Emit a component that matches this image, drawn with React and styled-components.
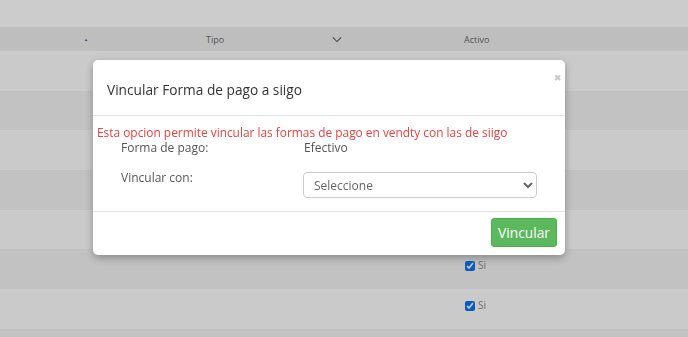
import React from "react";
import styled, { createGlobalStyle } from "styled-components";

const GlobalStyle = createGlobalStyle`
  html, body {
    margin: 0;
    padding: 0;
    background: #ffffff;
    font-family: "Open Sans", "Liberation Sans", sans-serif;
    overflow: hidden;
  }
`;

const rows = [
  { shade: false },
  { shade: true },
  { shade: false },
  { shade: true },
  { shade: false },
  { shade: true, active: true },
  { shade: false, active: true },
];

function App() {
  return (
    <>
      <GlobalStyle />
      <Page>
        <TopBar />
        <HeadRow>
          <SortMark>▲</SortMark>
          <HeadCell>Tipo</HeadCell>
          <Chevron viewBox="0 0 12 8">
            <path d="M1 1.5 L6 6.5 L11 1.5" fill="none" stroke="#5a5a5a" strokeWidth="1.3" />
          </Chevron>
          <HeadCell $wide>Activo</HeadCell>
        </HeadRow>
        {rows.map((r, i) => (
          <Row key={i} $shade={r.shade}>
            {r.active && (
              <ActiveCell>
                <Check type="checkbox" checked readOnly />
                <Yes>Si</Yes>
              </ActiveCell>
            )}
          </Row>
        ))}
        <Row $shade />
      </Page>

      <Backdrop>
        <Modal>
          <Close>✖</Close>
          <ModalHeader>
            <Title>Vincular Forma de pago a siigo</Title>
          </ModalHeader>
          <ModalBody>
            <Warning>
              Esta opcion permite vincular las formas de pago en vendty con las de siigo
            </Warning>
            <FormRow>
              <Label>Forma de pago:</Label>
              <Value>Efectivo</Value>
            </FormRow>
            <FormRow $gap>
              <Label>Vincular con:</Label>
              <SelectBox>
                <option>Seleccione</option>
              </SelectBox>
            </FormRow>
          </ModalBody>
          <ModalFooter>
            <LinkBtn>Vincular</LinkBtn>
          </ModalFooter>
        </Modal>
      </Backdrop>
    </>
  );
}

const Page = styled.div`
  width: 100%;
  height: 337px;
  overflow: hidden;
`;

const TopBar = styled.div`
  height: 27px;
  background: #ffffff;
`;

const HeadRow = styled.div`
  height: 24px;
  background: #eeeeee;
  display: flex;
  align-items: center;
  font-size: 9px;
  color: #6a6a6a;
`;

const SortMark = styled.span`
  font-size: 4px;
  color: #4a3aa0;
  margin-left: 84px;
  width: 120px;
`;

const HeadCell = styled.span`
  width: ${(p) => (p.$wide ? "auto" : "126px")};
  margin-left: ${(p) => (p.$wide ? "122px" : "2px")};
`;

const Chevron = styled.svg`
  width: 10px;
  height: 7px;
`;

const Row = styled.div`
  height: 39.7px;
  box-sizing: border-box;
  background: ${(p) => (p.$shade ? "#f3f3f3" : "#fdfdfd")};
  border-top: 1px solid ${(p) => (p.$shade ? "#f0f0f0" : "#ffffff")};
  display: flex;
  align-items: flex-start;
`;

const ActiveCell = styled.div`
  margin: 9px 0 0 465px;
  display: flex;
  align-items: flex-start;
`;

const Check = styled.input`
  width: 10px;
  height: 10px;
  margin: 2px 3px 0 0;
  accent-color: #0b74f0;
`;

const Yes = styled.span`
  font-size: 10px;
  color: #8a8a8a;
  line-height: 12px;
`;

const Backdrop = styled.div`
  position: fixed;
  inset: 0;
  background: rgba(0, 0, 0, 0.2);
`;

const Modal = styled.div`
  position: relative;
  margin: 60px 0 0 93px;
  width: 472px;
  background: #ffffff;
  border-radius: 5px;
  box-shadow: 0 3px 9px rgba(0, 0, 0, 0.3);
  color: #555555;
`;

const Close = styled.span`
  position: absolute;
  top: 11px;
  right: 3px;
  font-size: 9px;
  color: #c8c8c8;
`;

const ModalHeader = styled.div`
  padding: 20px 14px 15px;
  border-bottom: 1px solid #e5e5e5;
`;

const Title = styled.h4`
  margin: 0;
  font-size: 13.7px;
  font-weight: 400;
  line-height: 20px;
  color: #333333;
`;

const ModalBody = styled.div`
  padding: 8px 28px 13px 4px;
`;

const Warning = styled.div`
  font-size: 11.9px;
  line-height: 16px;
  color: #e8413e;
`;

const FormRow = styled.div`
  display: grid;
  grid-template-columns: 182px 1fr;
  margin-top: ${(p) => (p.$gap ? "14px" : "0")};
  padding-left: 24px;
  font-size: 12px;
  line-height: 16px;
`;

const Label = styled.span`
  color: #555555;
`;

const Value = styled.span`
  color: #555555;
  padding-left: 1px;
`;

const SelectBox = styled.select`
  margin-top: 2px;
  height: 26px;
  width: 234px;
  padding: 0 6px;
  border: 1px solid #cccccc;
  border-radius: 4px;
  background: #ffffff;
  font-family: "Open Sans", "Liberation Sans", sans-serif;
  font-size: 12px;
  color: #666666;
`;

const ModalFooter = styled.div`
  border-top: 1px solid #e5e5e5;
  padding: 6px 8px 8px;
  display: flex;
  justify-content: flex-end;
`;

const LinkBtn = styled.button`
  height: 29px;
  padding: 0 6px;
  border: 1px solid #4cae4c;
  border-radius: 3px;
  background: #5cb85c;
  color: #ffffff;
  font-family: "Open Sans", "Liberation Sans", sans-serif;
  font-size: 13.8px;
`;

export default App;
